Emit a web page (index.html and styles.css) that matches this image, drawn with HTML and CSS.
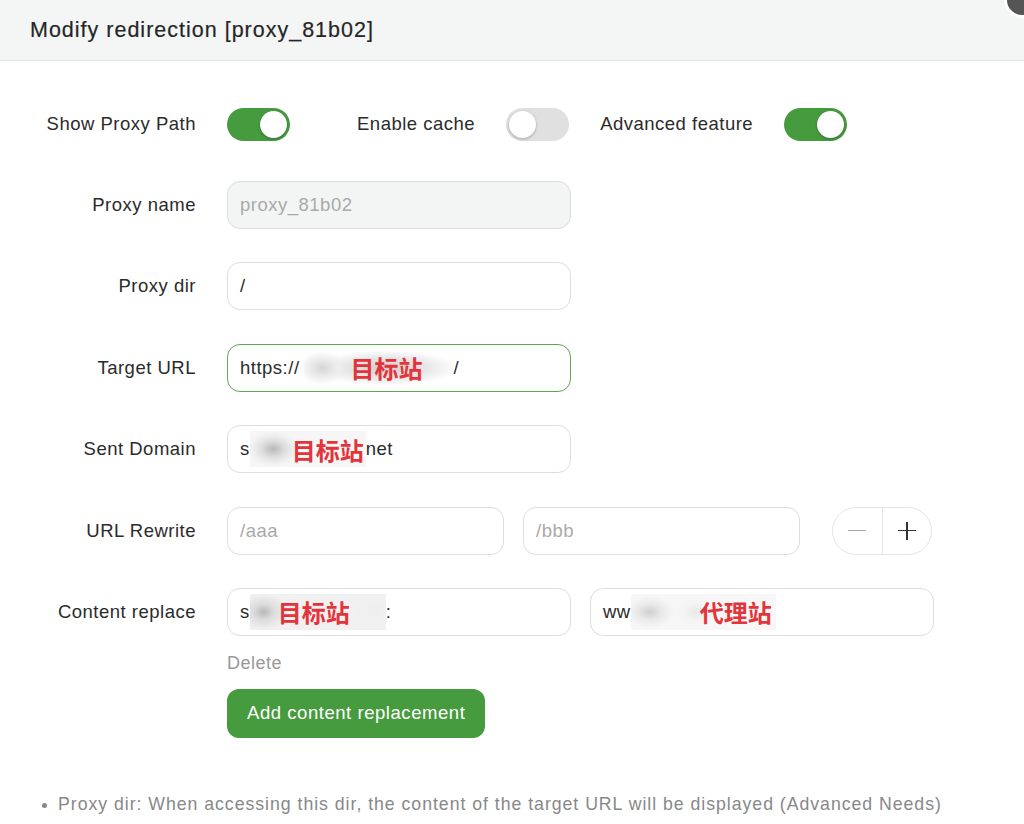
FILE: index.html
```html
<!DOCTYPE html>
<html lang="en">
<head>
    <meta charset="UTF-8">
    <meta name="viewport" content="width=device-width, initial-scale=1.0">
    <title>Modify redirection</title>
    <link rel="stylesheet" href="styles.css">
</head>
<body>
    <div class="dialog">
        <div class="dialog-header">
            <h1>Modify redirection [proxy_81b02]</h1>
            <span class="close-btn"></span>
        </div>

        <div class="dialog-body">
            <div class="switch-row">
                <span class="label">Show Proxy Path</span>
                <span class="switch on"></span>
                <span class="switch-text first">Enable cache</span>
                <span class="switch"></span>
                <span class="switch-text">Advanced feature</span>
                <span class="switch on"></span>
            </div>

            <div class="form">
                <span class="label">Proxy name</span>
                <div class="field">
                    <div class="input disabled">proxy_81b02</div>
                </div>

                <span class="label">Proxy dir</span>
                <div class="field">
                    <div class="input">/</div>
                </div>

                <span class="label">Target URL</span>
                <div class="field">
                    <div class="input focus">https://<span class="mask mask-url"><b>目标站</b></span>/</div>
                </div>

                <span class="label">Sent Domain</span>
                <div class="field">
                    <div class="input">s<span class="mask mask-domain"><b>目标站</b></span>net</div>
                </div>

                <span class="label">URL Rewrite</span>
                <div class="field rewrite">
                    <div class="input half placeholder">/aaa</div>
                    <div class="input half placeholder">/bbb</div>
                    <div class="stepper">
                        <span class="minus"></span>
                        <span class="plus"></span>
                    </div>
                </div>

                <span class="label">Content replace</span>
                <div class="field replace">
                    <div class="pair">
                        <div class="input">s<span class="mask mask-src"><b>目标站</b></span>:</div>
                        <div class="input">ww<span class="mask mask-dst"><b>代理站</b></span></div>
                    </div>
                    <a class="delete">Delete</a>
                    <button class="btn-add">Add content replacement</button>
                </div>
            </div>

            <ul class="tips">
                <li>Proxy dir: When accessing this dir, the content of the target URL will be displayed (Advanced Needs)</li>
            </ul>
        </div>
    </div>
</body>
</html>
```

FILE: styles.css
```css
body {
    margin: 0;
    background: #fff;
    font-family: "Liberation Sans", Arial, sans-serif;
    color: #333;
    overflow: hidden;
}
.dialog {
    width: 1024px;
    height: 824px;
    overflow: hidden;
}
.dialog-header {
    position: relative;
    height: 60px;
    background: #f4f5f5;
    border-bottom: 1px solid #e4e5e6;
    padding-left: 30px;
    display: flex;
    align-items: center;
}
.dialog-header h1 {
    margin: 0;
    font-size: 21.5px;
    font-weight: normal;
    color: #262626;
    letter-spacing: 1px;
    -webkit-text-stroke: 0.2px #262626;
}
.close-btn {
    position: absolute;
    right: -16px;
    top: -18px;
    width: 30px;
    height: 30px;
    border-radius: 50%;
    background: #555;
    border: 3px solid #fff;
}
.dialog-body {
    padding-top: 47px;
}
.label {
    width: 196px;
    text-align: right;
    font-size: 18.5px;
    letter-spacing: 0.5px;
    color: #2b2b2b;
    flex-shrink: 0;
    white-space: nowrap;
}

/* switches */
.switch-row {
    display: flex;
    align-items: center;
    gap: 31px;
    height: 32px;
}
.switch {
    position: relative;
    width: 63px;
    height: 33px;
    border-radius: 17px;
    background: #e0e0e0;
    flex-shrink: 0;
}
.switch::after {
    content: "";
    position: absolute;
    left: 3px;
    top: 3px;
    width: 27px;
    height: 27px;
    border-radius: 50%;
    background: #fff;
    box-shadow: 0 1px 3px rgba(0, 0, 0, 0.28);
}
.switch.on {
    background: #479b3f;
}
.switch.on::after {
    left: 33px;
}
.switch-text {
    font-size: 18.5px;
    letter-spacing: 0.5px;
    color: #2b2b2b;
}
.switch-text.first {
    margin-left: 36px;
}

/* form grid */
.form {
    display: grid;
    grid-template-columns: 196px 1fr;
    column-gap: 31px;
    row-gap: 33.4px;
    margin-top: 41px;
}
.form .label {
    height: 48px;
    line-height: 48px;
}
.field {
    display: flex;
    align-items: center;
    gap: 20px;
}
.input {
    box-sizing: border-box;
    width: 344px;
    height: 48px;
    border: 1.5px solid #dcdde3;
    border-radius: 13px;
    padding-left: 12px;
    display: flex;
    align-items: center;
    font-size: 18.5px;
    letter-spacing: 0.5px;
    color: #2b2b2b;
    background: #fff;
    white-space: nowrap;
    overflow: hidden;
}
.input.disabled {
    background: #f3f4f4;
    color: #aaa;
}
.input.focus {
    border-color: #5aa84f;
}
.input.placeholder {
    color: #aaa;
}
.input.half {
    width: 277px;
}
.rewrite {
    gap: 19px;
}
.stepper {
    box-sizing: border-box;
    display: flex;
    margin-left: 13px;
    width: 100px;
    height: 48px;
    border: 1.5px solid #e4e5ea;
    border-radius: 24px;
    overflow: hidden;
}
.stepper span {
    flex: 1;
    position: relative;
}
.stepper span::before,
.stepper .plus::after {
    content: "";
    position: absolute;
    left: 50%;
    top: 50%;
    width: 18px;
    height: 1.6px;
    margin: -0.8px 0 0 -9px;
    background: #aaa;
}
.stepper .minus {
    border-right: 1px solid #e4e5ea;
}
.stepper .plus::before {
    background: #333;
}
.stepper .plus::after {
    width: 1.6px;
    height: 18px;
    margin: -9px 0 0 -0.8px;
    background: #333;
}

/* masked (blurred) text */
.mask {
    display: inline-flex;
    align-items: center;
    height: 36px;
    box-sizing: border-box;
    letter-spacing: 0;
}
.mask b {
    font-family: "Noto Sans CJK SC", sans-serif;
    font-weight: bold;
    font-size: 24px;
    color: #e3343b;
}
.mask-url {
    width: 150px;
    margin-left: 4px;
    padding-left: 47px;
    background: radial-gradient(ellipse 24px 17px at 12% 50%, #d6d6d6 0, rgba(236,236,236,0.85) 60%, rgba(255,255,255,0) 100%), radial-gradient(ellipse 72px 18px at 55% 50%, #cfcfcf 0, #e6e6e6 55%, rgba(255,255,255,0) 100%);
}
.mask-domain {
    width: 116px;
    padding-left: 42px;
    background: radial-gradient(ellipse 26px 18px at 20% 50%, #b8b8b8 0, #dedede 45%, #f0f0f0 80%, #f6f6f6 100%), #f6f6f6;
}
.mask-src {
    width: 136px;
    padding-left: 28px;
    background: radial-gradient(ellipse 24px 18px at 10% 50%, #b8b8b8 0, #dddddd 45%, rgba(240,240,240,0.9) 100%), radial-gradient(ellipse 20px 14px at 90% 50%, #e0e0e0 0, rgba(245,245,245,0.8) 100%), #f5f5f5;
}
.mask-dst {
    width: 145px;
    padding-left: 69px;
    background: radial-gradient(ellipse 24px 16px at 13% 50%, #cfcfcf 0, #e9e9e9 50%, rgba(245,245,245,0.6) 100%), radial-gradient(ellipse 22px 16px at 45% 50%, #d4d4d4 0, rgba(240,240,240,0.7) 60%, rgba(255,255,255,0) 100%), rgba(246,246,246,0.7);
}

/* content replace block */
.replace {
    flex-direction: column;
    align-items: flex-start;
    gap: 0;
}
.pair {
    display: flex;
    gap: 19px;
}
.delete {
    margin-top: 16px;
    font-size: 18px;
    letter-spacing: 0.5px;
    color: #999;
    line-height: 22px;
}
.btn-add {
    margin-top: 15px;
    height: 49px;
    padding: 0 20px;
    border: none;
    border-radius: 12px;
    background: #479b3f;
    color: #fff;
    font-family: inherit;
    font-size: 18.5px;
    letter-spacing: 0.55px;
}

.tips {
    margin: 56px 0 0;
    padding-left: 58px;
    color: #888;
    font-size: 17.7px;
    letter-spacing: 0.97px;
}
.tips li::marker {
    font-size: 15px;
}
```
